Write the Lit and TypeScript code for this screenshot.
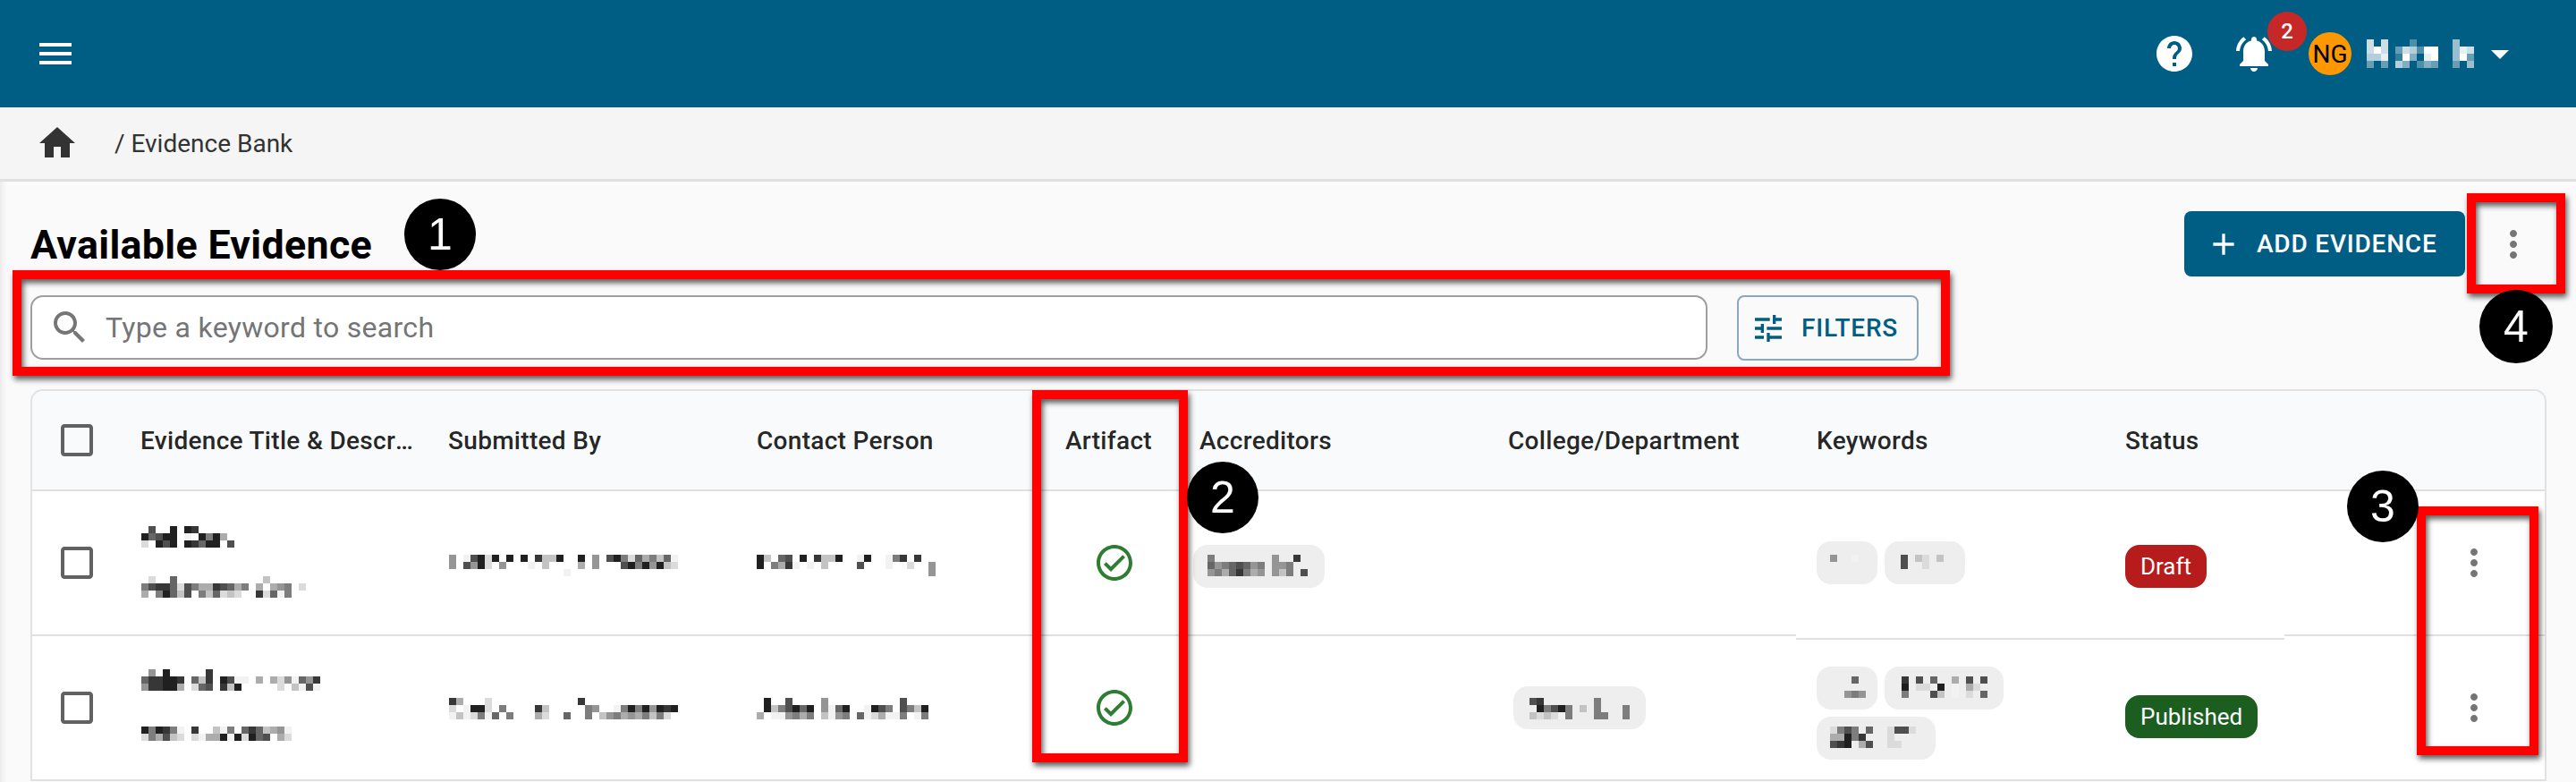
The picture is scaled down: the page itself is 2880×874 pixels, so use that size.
import { LitElement, html, css, svg } from "lit";
import { customElement, property } from "lit/decorators.js";

const P = {
  menu: "M3 18h18v-2H3v2zm0-5h18v-2H3v2zm0-7v2h18V6H3z",
  home: "M10 20v-6h4v6h5v-8h3L12 3 2 12h3v8z",
  help: "M12 2C6.48 2 2 6.48 2 12s4.48 10 10 10 10-4.48 10-10S17.52 2 12 2zm1 17h-2v-2h2v2zm2.07-7.75-.9.92C13.45 12.9 13 13.5 13 15h-2v-.5c0-1.1.45-2.1 1.17-2.83l1.24-1.26c.37-.36.59-.86.59-1.41 0-1.1-.9-2-2-2s-2 .9-2 2H8c0-2.21 1.79-4 4-4s4 1.79 4 4c0 .88-.36 1.68-.93 2.25z",
  bell: "M7.58 4.08 6.15 2.65C3.75 4.48 2.17 7.3 2.03 10.5h2c.15-2.65 1.51-4.97 3.55-6.42zm12.39 6.42h2c-.15-3.2-1.73-6.02-4.12-7.85l-1.42 1.43c2.02 1.45 3.39 3.77 3.54 6.42zM18 11c0-3.07-1.64-5.64-4.5-6.32V4c0-.83-.67-1.5-1.5-1.5s-1.5.67-1.5 1.5v.68C7.63 5.36 6 7.92 6 11v5l-2 2v1h16v-1l-2-2v-5zm-6 11c.14 0 .27-.01.4-.04.65-.14 1.18-.58 1.44-1.18.1-.24.15-.5.15-.78h-4c.01 1.1.9 2 2.01 2z",
  caret: "M7 10l5 5 5-5z",
  search: "M15.5 14h-.79l-.28-.27C15.41 12.59 16 11.11 16 9.5 16 5.91 13.09 3 9.5 3S3 5.91 3 9.5 5.91 16 9.5 16c1.61 0 3.09-.59 4.23-1.57l.27.28v.79l5 4.99L20.49 19l-4.99-5zm-6 0C7.01 14 5 11.99 5 9.5S7.01 5 9.5 5 14 7.01 14 9.5 11.99 14 9.5 14z",
  tune: "M3 17v2h6v-2H3zM3 5v2h10V5H3zm10 16v-2h8v-2h-8v-2h-2v6h2zM7 9v2H3v2h4v2h2V9H7zm14 4v-2H11v2h10zm-6-4h2V7h4V5h-4V3h-2v6z",
  add: "M19 13h-6v6h-2v-6H5v-2h6V5h2v6h6v2z",
  more: "M12 8c1.1 0 2-.9 2-2s-.9-2-2-2-2 .9-2 2 .9 2 2 2zm0 2c-1.1 0-2 .9-2 2s.9 2 2 2 2-.9 2-2-.9-2-2-2zm0 6c-1.1 0-2 .9-2 2s.9 2 2 2 2-.9 2-2-.9-2-2-2z",
  box: "M19 5v14H5V5h14m0-2H5c-1.1 0-2 .9-2 2v14c0 1.1.9 2 2 2h14c1.1 0 2-.9 2-2V5c0-1.1-.9-2-2-2z",
  ok: "M12 2C6.48 2 2 6.48 2 12s4.48 10 10 10 10-4.48 10-10S17.52 2 12 2zm0 18c-4.41 0-8-3.59-8-8s3.59-8 8-8 8 3.59 8 8-3.59 8-8 8zm4.59-12.42L10 14.17l-2.59-2.58L6 13l4 4 8-8z",
};

const icon = (d: string, size = 48) => html`<svg class="ic" width=${size} height=${size} viewBox="0 0 24 24"><path d=${d}></path></svg>`;

/* A pixelated (redacted) patch: each char is one 8px square, "." empty, digits a tone. */
@customElement("mosaic-patch")
class MosaicPatch extends LitElement {
  @property({ type: Array }) rows: string[] = [];
  @property({ type: Boolean }) light = false;
  static styles = css`
    :host { display: block; line-height: 0; }
    svg { display: block; shape-rendering: crispEdges; }
  `;
  tone(d: number) {
    if (this.light) return `rgba(255,255,255,${(1 - d / 10).toFixed(2)})`;
    const g = Math.round(0x20 + (d * (0xf2 - 0x20)) / 9);
    return `rgb(${g},${g},${g})`;
  }
  render() {
    const cols = Math.max(...this.rows.map((r) => r.length));
    return html`<svg width=${cols * 8} height=${this.rows.length * 8}>
      ${this.rows.map((r, y) =>
        [...r].map((c, x) =>
          c === "." ? null : svg`<rect x=${x * 8} y=${y * 8} width="8" height="8" fill=${this.tone(+c)}></rect>`
        )
      )}
    </svg>`;
  }
}

type Chip = { w: number; pl: number; pt: number; rows: string[] };
const RECORDS = [
  {
    titleTop: 39, subGap: 32,
    title: [".2..0.01", "03200.9.0406", "8.020.01300.2"],
    sub: [".8..3............7", "421138246612364.6.654.8", "6.40372.473878..18394"],
    whoTop: 71,
    submitted: ["5.92080.0.0.1770..0.5.2048364739", "5.2508.5...9.7....6.5...20405078", "................9"],
    contact: ["07.32.0.1770..90..941.1", "0.4619.9.7....2...9..8..5", "........................5"],
    accTop: 60,
    acc: [{ w: 147, pl: 16, pt: 11, rows: ["4........5..1", "35432354.554", "54631465.574.2"] }] as Chip[],
    college: [] as Chip[],
    kwTop: 56,
    kw: [
      { w: 68, pl: 15, pt: 15, rows: ["5..9"] },
      { w: 90, pl: 18, pt: 15, rows: ["2.78.7", "2..8"] },
    ] as Chip[],
    statusTop: 60, status: "Draft", statusCls: "draft", stepped: true,
  },
  {
    titleTop: 37, subGap: 40,
    title: [".5.0.....1", "311001.371.0299.6.6859351", "511006.832.170.....8.7929"],
    sub: ["040149.1..794.3137659", "846278.89660908032.68"],
    whoTop: 69,
    submitted: ["16...8............1", "8.9008.4....17.....45..940405010", "9798493.4...68..3..4.7546564748"],
    contact: [".0..2....5..........2", ".0742030.5930..9024.2470", "6.995464.7954.3986994.94"],
    accTop: 0,
    acc: [] as Chip[],
    college: [{ w: 148, pl: 18, pt: 13, rows: ["21.......4", ".04204.7.4...4", "787894...44..4"] }] as Chip[],
    kwTop: 34,
    kw: [
      { w: 68, pl: 31, pt: 11, rows: [".3", "..", "545"] },
      { w: 133, pl: 19, pt: 11, rows: ["1.2.3..6.2.2", "0.88.0.9.68", "4...27.9.8.3"] },
      { w: 133, pl: 15, pt: 11, rows: ["8424.3..8228", "66041...8", "210.62..88"] },
    ] as Chip[],
    statusTop: 66, status: "Published", statusCls: "pub", stepped: false,
  },
];

const COLUMNS = ["Evidence Title & Description", "Submitted By", "Contact Person", "Artifact", "Accreditors", "College/Department", "Keywords", "Status"];
const NOTE_BOXES = [
  [14, 302, 2166, 118],
  [1154, 436, 174, 416],
  [2702, 566, 136, 278],
  [2758, 216, 110, 112],
];
const NOTE_DOTS: [number, number, number, string][] = [
  [452, 222, 80, "1"],
  [1327, 516, 80, "2"],
  [2624, 526, 80, "3"],
  [2772, 324, 82, "4"],
];

@customElement("app-root")
class AppRoot extends LitElement {
  static styles = css`
    :host {
      display: block; position: relative; width: 2880px; height: 874px; overflow: hidden;
      background: #fafafa; font-family: Roboto, "Liberation Sans", sans-serif; color: rgba(0,0,0,.87);
    }
    .ic { display: block; fill: currentColor; flex: none; }

    .bar { display: flex; align-items: center; height: 120px; padding: 0 61px 0 38px; background: #005e85; color: #fff; box-sizing: border-box; }
    .grow { flex: 1; }
    .bell { position: relative; margin-left: 41px; }
    .count {
      position: absolute; left: 39px; top: -23px; width: 44px; height: 44px; border-radius: 50%;
      background: #c62828; display: flex; align-items: center; justify-content: center; font-size: 24px; font-weight: 500;
    }
    .avatar {
      width: 48px; height: 48px; margin-left: 37px; border-radius: 50%; background: #ff9800; color: #000;
      display: flex; align-items: center; justify-content: center; font-size: 28px;
    }
    .name { margin: 0 5px 0 17px; }

    .crumb {
      display: flex; align-items: center; height: 83px; padding-left: 40px; box-sizing: border-box;
      background: #f5f5f5; border-bottom: 3px solid #e0e0e0; color: #333; font-size: 28px;
    }
    .crumb span { margin-left: 40px; }

    .page { padding: 33px 33px 0 34px; box-shadow: inset 10px 0 10px -10px rgba(0,0,0,.12); height: 671px; box-sizing: border-box; }
    .top { display: flex; align-items: center; height: 73px; }
    h1 { margin: 0; padding-top: 2px; font-size: 44.8px; font-weight: 700; color: #000; letter-spacing: .3px; }
    .btn {
      display: flex; align-items: center; box-sizing: border-box; height: 73px; border-radius: 8px;
      font-size: 28px; font-weight: 500; letter-spacing: .8px; white-space: nowrap;
    }
    .add { width: 314px; padding-left: 24px; gap: 17px; background: #005e85; color: #fff; }
    .kebab { color: #757575; }
    .top .kebab { margin: 0 13px 0 30px; }

    .find { display: grid; grid-template-columns: 1875px 203px; column-gap: 33px; margin-top: 21px; }
    .search {
      display: flex; align-items: center; height: 72px; box-sizing: border-box; padding-left: 18px; gap: 16px;
      background: #fff; border: 2px solid #9e9e9e; border-radius: 14px; color: #757575; font-size: 32px; letter-spacing: .3px;
    }
    .filters { width: 203px; padding-left: 13px; gap: 17px; border: 2px solid #8aa9bf; color: #005e85; }

    .table {
      margin-top: 32px; box-sizing: border-box; border: 2px solid #e2e2e2; border-bottom: 0; border-radius: 14px 14px 0 0;
      background: #fff; overflow: hidden;
    }
    .row { display: grid; grid-template-columns: 98px 344px 345px 345px 150px 345px 345px 345px 201px 291px; grid-template-rows: 162px; }
    .cell {
      box-sizing: border-box; height: 162px; padding-left: 23px; border-bottom: 2px solid #e0e0e0; min-width: 0;
      display: flex; flex-direction: column; align-items: flex-start;
    }
    .cell.step { height: 166px; }
    .head { grid-template-rows: 112px; background: #f9fafc; }
    .head .cell { height: 112px; justify-content: center; font-size: 28px; font-weight: 500; letter-spacing: .3px; }
    .head .label { width: 100%; padding-right: 12px; box-sizing: border-box; overflow: hidden; text-overflow: ellipsis; white-space: nowrap; }
    .head .box { padding-left: 26px; }
    .check { padding-left: 26px; padding-top: 56px; color: #616161; }
    .box { color: #616161; }
    .nudge { padding-left: 24px; }
    .ok { padding: 56px 0 0 54px; color: #2e7d32; }
    .acc { padding-left: 16px; }
    .coll { padding-left: 29px; }
    .act { padding: 56px 0 0 188px; color: #757575; }

    .chips { display: flex; flex-wrap: wrap; gap: 8px; }
    .chip { box-sizing: border-box; height: 48px; border-radius: 16px; background: #eee; }
    .pill {
      display: flex; align-items: center; height: 48px; padding: 0 17px; border-radius: 16px; color: #fff;
      font-size: 26px;
    }
    .draft { background: #b71c1c; }
    .pub { background: #1b5e20; }

    .note {
      position: absolute; box-sizing: border-box; border: 10px solid #f00;
      filter: drop-shadow(2px 4px 3px rgba(0,0,0,.65));
    }
    .dot {
      position: absolute; border-radius: 50%; background: #000; color: #fff;
      display: flex; align-items: center; justify-content: center;
      font-family: "Liberation Sans", Arial, sans-serif; font-size: 50px;
    }
  `;

  chip(c: Chip) {
    return html`<div class="chip" style="width:${c.w}px;padding:${c.pt}px 0 0 ${c.pl}px"><mosaic-patch .rows=${c.rows}></mosaic-patch></div>`;
  }

  row(r: (typeof RECORDS)[number]) {
    return html`<div class="row">
      <div class="cell check">${icon(P.box)}</div>
      <div class="cell nudge" style="padding-top:${r.titleTop}px">
        <mosaic-patch .rows=${r.title}></mosaic-patch>
        <mosaic-patch style="margin-top:${r.subGap}px" .rows=${r.sub}></mosaic-patch>
      </div>
      <div class="cell nudge" style="padding-top:${r.whoTop}px"><mosaic-patch .rows=${r.submitted}></mosaic-patch></div>
      <div class="cell" style="padding-top:${r.whoTop}px"><mosaic-patch .rows=${r.contact}></mosaic-patch></div>
      <div class="cell ok">${icon(P.ok)}</div>
      <div class="cell acc" style="padding-top:${r.accTop}px">${r.acc.map((c) => this.chip(c))}</div>
      <div class="cell coll" style="padding-top:56px">${r.college.map((c) => this.chip(c))}</div>
      <div class="cell ${r.stepped ? "step" : ""}" style="padding-top:${r.kwTop}px"><div class="chips">${r.kw.map((c) => this.chip(c))}</div></div>
      <div class="cell ${r.stepped ? "step" : ""}" style="padding-top:${r.statusTop}px"><div class="pill ${r.statusCls}">${r.status}</div></div>
      <div class="cell act">${icon(P.more)}</div>
    </div>`;
  }

  render() {
    return html`
      <header class="bar">
        ${icon(P.menu)}
        <div class="grow"></div>
        ${icon(P.help)}
        <div class="bell">${icon(P.bell)}<div class="count">2</div></div>
        <div class="avatar">NG</div>
        <mosaic-patch class="name" light .rows=${["2.2...7.....4", "202.623700..412", "331.805.10..406", "6.6.35.756..6.4"]}></mosaic-patch>
        ${icon(P.caret)}
      </header>
      <nav class="crumb">${icon(P.home)}<span>/ Evidence Bank</span></nav>
      <main class="page">
        <div class="top">
          <h1>Available Evidence</h1>
          <div class="grow"></div>
          <div class="btn add">${icon(P.add, 40)}ADD EVIDENCE</div>
          <div class="kebab">${icon(P.more)}</div>
        </div>
        <div class="find">
          <div class="search">${icon(P.search)}<span>Type a keyword to search</span></div>
          <div class="btn filters">${icon(P.tune, 40)}FILTERS</div>
        </div>
        <div class="table">
          <div class="row head">
            <div class="cell box">${icon(P.box)}</div>
            ${COLUMNS.map((c) => html`<div class="cell"><div class="label">${c}</div></div>`)}
            <div class="cell"></div>
          </div>
          ${RECORDS.map((r) => this.row(r))}
        </div>
      </main>
      ${NOTE_BOXES.map(([x, y, w, h]) => html`<div class="note" style="left:${x}px;top:${y}px;width:${w}px;height:${h}px"></div>`)}
      ${NOTE_DOTS.map(([x, y, s, n]) => html`<div class="dot" style="left:${x}px;top:${y}px;width:${s}px;height:${s}px">${n}</div>`)}
    `;
  }
}
